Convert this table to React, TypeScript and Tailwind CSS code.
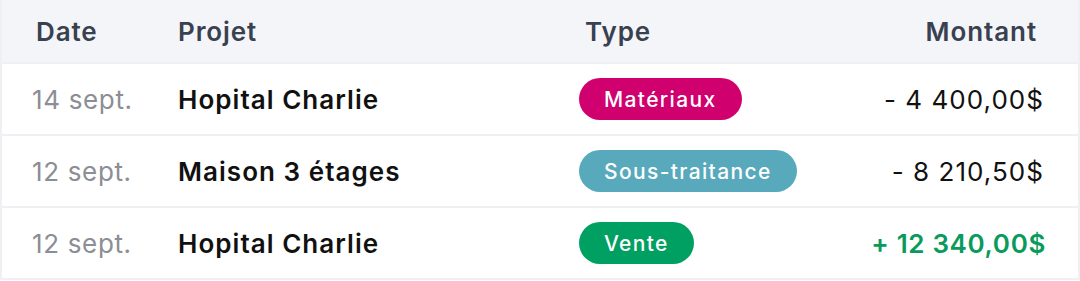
const rows = [
  {
    date: "14 sept.",
    project: "Hopital Charlie",
    type: "Matériaux",
    badge: "bg-[#d1006f]",
    amount: "- 4 400,00$",
    positive: false,
  },
  {
    date: "12 sept.",
    project: "Maison 3 étages",
    type: "Sous-traitance",
    badge: "bg-[#58a9bb]",
    amount: "- 8 210,50$",
    positive: false,
  },
  {
    date: "12 sept.",
    project: "Hopital Charlie",
    type: "Vente",
    badge: "bg-[#00a062]",
    amount: "+ 12 340,00$",
    positive: true,
  },
];

export default function App() {
  return (
    <div className="h-[281px] w-[1080px] bg-white font-['Inter',sans-serif]">
      <div className="border-x-2 border-b-2 border-[#eef0f4]">
        <div className="grid h-[62px] grid-cols-[142px_407px_1fr_auto] items-center bg-[#f3f5f8] pl-[34px] pr-[41px] text-[26px] font-semibold tracking-[0.035em] text-[#394150]">
          <span>Date</span>
          <span>Projet</span>
          <span>Type</span>
          <span className="text-right">Montant</span>
        </div>
        {rows.map((row, i) => (
          <div
            key={i}
            className="grid h-[72px] grid-cols-[146px_401px_1fr_auto] items-center border-t-2 border-[#eef0f4] pl-[30px] pr-[34px] text-[26px] tracking-[0.04em]"
          >
            <span className="tracking-[0.025em] text-[#8b8e94]">{row.date}</span>
            <span className="font-semibold text-[#111]">{row.project}</span>
            <div>
              <span
                className={`inline-flex h-[42px] items-center rounded-full px-[25px] text-[21px] font-medium tracking-[0.065em] text-white ${row.badge}`}
              >
                {row.type}
              </span>
            </div>
            <span
              className={
                row.positive
                  ? "-mr-[2px] text-right font-semibold tracking-[0.025em] text-[#0a9a5c]"
                  : "text-right text-[#111]"
              }
            >
              {row.amount}
            </span>
          </div>
        ))}
      </div>
    </div>
  );
}
